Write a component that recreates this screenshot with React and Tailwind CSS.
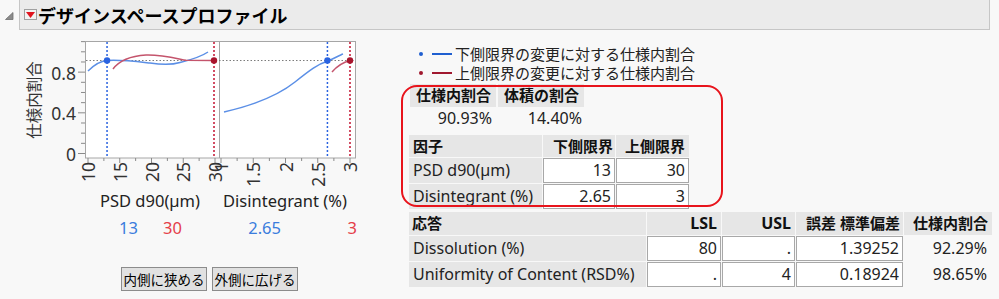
import React from 'react';

const PSDX = (v) => 88 + (v - 10) * 6.35;
const DISX = (v) => 350 - (3 - v) * 64.5;
const Y = (v) => 153 - v * 101.7;
const LIM = Y(0.9093);

function Chart() {
  const yMinor = [0, 0.1, 0.2, 0.3, 0.4, 0.5, 0.6, 0.7, 0.8, 0.9, 1.0, 1.1];
  const psdTicks = [10, 15, 20, 25, 30];
  const psdMinor = [12.5, 17.5, 22.5, 27.5];
  const disTicks = [1, 1.5, 2, 2.5, 3];
  const disMinor = [1.25, 1.75, 2.25, 2.75];
  const tickFont = { fontFamily: '"Noto Sans", sans-serif', fontSize: 17.5, fill: '#333' };
  const labelFont = { fontFamily: '"Noto Sans", sans-serif', fontSize: 16.5, fill: '#222' };

  return (
    <svg width="365" height="188" viewBox="0 30 365 188" className="block">
      {/* y title */}
      <text
        transform="translate(33,100) rotate(-90)"
        textAnchor="middle"
        dominantBaseline="central"
        style={{ fontFamily: '"Noto Sans CJK JP", sans-serif', fontSize: 15.5, fill: '#333' }}
      >
        仕様内割合
      </text>

      {/* y ticks */}
      {yMinor.map((v) => {
        const major = v === 0 || v === 0.4 || v === 0.8;
        return (
          <line key={v} x1={major ? 78 : 81} x2="85" y1={Y(v) + 0.5} y2={Y(v) + 0.5} stroke="#8a8a8a" strokeWidth="1" />
        );
      })}
      {[0, 0.4, 0.8].map((v) => (
        <text key={v} x="76" y={Y(v) + 1} textAnchor="end" dominantBaseline="central" style={tickFont}>
          {v === 0 ? '0' : v.toFixed(1)}
        </text>
      ))}

      {/* panels */}
      <rect x="85.5" y="41.5" width="270" height="116.5" fill="#fff" stroke="#a6a6a6" />
      <line x1="219.5" x2="219.5" y1="41.5" y2="158" stroke="#a6a6a6" />

      {/* x ticks */}
      {psdTicks.map((v) => (
        <line key={v} x1={PSDX(v)} x2={PSDX(v)} y1="158" y2="163" stroke="#8a8a8a" />
      ))}
      {psdMinor.map((v) => (
        <line key={v} x1={PSDX(v)} x2={PSDX(v)} y1="158" y2="161" stroke="#8a8a8a" />
      ))}
      {disTicks.map((v) => (
        <line key={v} x1={DISX(v)} x2={DISX(v)} y1="158" y2="163" stroke="#8a8a8a" />
      ))}
      {disMinor.map((v) => (
        <line key={v} x1={DISX(v)} x2={DISX(v)} y1="158" y2="161" stroke="#8a8a8a" />
      ))}
      {psdTicks.map((v) => (
        <text key={v} transform={`translate(${PSDX(v)},162) rotate(-90)`} textAnchor="end" dominantBaseline="central" style={tickFont}>
          {v}
        </text>
      ))}
      {disTicks.map((v) => (
        <text key={v} transform={`translate(${DISX(v)},162) rotate(-90)`} textAnchor="end" dominantBaseline="central" style={tickFont}>
          {v}
        </text>
      ))}

      {/* limit reference line */}
      <line x1="86" x2="355" y1={LIM} y2={LIM} stroke="#7a7a7a" strokeWidth="1" strokeDasharray="1.5 2" />

      {/* vertical limit lines */}
      <line x1={PSDX(13)} x2={PSDX(13)} y1="42" y2="158" stroke="#2a63e0" strokeWidth="1.5" strokeDasharray="2 2" />
      <line x1={PSDX(30) - 1} x2={PSDX(30) - 1} y1="42" y2="158" stroke="#c41230" strokeWidth="1.5" strokeDasharray="2 2" />
      <line x1={DISX(2.65)} x2={DISX(2.65)} y1="42" y2="158" stroke="#2a63e0" strokeWidth="1.5" strokeDasharray="2 2" />
      <line x1={DISX(3)} x2={DISX(3)} y1="42" y2="158" stroke="#c41230" strokeWidth="1.5" strokeDasharray="2 2" />

      {/* PSD curves */}
      <path d="M88,71 C95,64 100,61 107,60.5 C120,59.5 132,61 150,63 C160,64.5 170,65.5 180,62.5 C190,60 200,57.5 208,52" fill="none" stroke="#5b8fe6" strokeWidth="1.5" />
      <path d="M113,69 C119,61 130,56 146,55 C160,54.5 172,57.5 186,60.3 L214,60.5" fill="none" stroke="#c4546c" strokeWidth="1.5" />
      <circle cx={PSDX(13)} cy={LIM} r="3.2" fill="#2a63e0" />
      <circle cx={PSDX(30) - 1} cy={LIM} r="3.2" fill="#a8142c" />

      {/* Disintegrant curves */}
      <path d="M224,112 C250,106 275,98 295,82 C310,70 318,64 328,61 C335,58 340,55 343,54" fill="none" stroke="#5b8fe6" strokeWidth="1.5" />
      <path d="M332,72 C338,65 344,62 350,60.5" fill="none" stroke="#c4546c" strokeWidth="1.5" />
      <circle cx={DISX(2.65)} cy={LIM} r="3.2" fill="#2a63e0" />
      <circle cx={DISX(3)} cy={LIM} r="3.2" fill="#a8142c" />

      {/* axis labels */}
      <text x="150" y="200" textAnchor="middle" dominantBaseline="central" style={labelFont}>
        PSD d90(µm)
      </text>
      <text x="285" y="200" textAnchor="middle" dominantBaseline="central" style={labelFont}>
        Disintegrant (%)
      </text>
    </svg>
  );
}

function Legend({ color, children }) {
  return (
    <div className="flex h-[19px] items-center">
      <span className="ml-[10px] h-[4px] w-[4px] rounded-full" style={{ background: color }} />
      <span className="ml-[9px] h-[2px] w-[20px]" style={{ background: color }} />
      <span className="ml-[3px] font-['Noto_Sans_CJK_JP',sans-serif] text-[15px] leading-[19px] text-[#222]">{children}</span>
    </div>
  );
}

const hd = "bg-[#e6e6e6] font-['Noto_Sans','Noto_Sans_CJK_JP',sans-serif] font-bold text-[15px] leading-[22px] text-[#111]";
const lbl = "bg-[#e6e6e6] pl-[4px] font-['Noto_Sans',sans-serif] text-[16px] leading-[25px] text-[#222]";
const inp = "border border-[#a8a8a8] bg-white pr-[3px] text-right font-['Noto_Sans',sans-serif] text-[16px] leading-[23px] text-[#222]";
const num = "text-right font-['Noto_Sans',sans-serif] text-[16px] text-[#222]";

export default function App() {
  return (
    <div className="relative h-[299px] w-[999px] overflow-hidden bg-[#f8f8f8] font-['Noto_Sans','Noto_Sans_CJK_JP',sans-serif]">
      {/* outline header */}
      <div className="flex h-[30px] items-center">
        <div className="flex w-[19px] justify-center pt-[1px]">
          <svg width="9" height="8" viewBox="0 0 9 8">
            <polygon points="8,0.5 8,7.5 0.5,7.5" fill="#8c8c8c" stroke="#6f6f6f" strokeWidth="0.8" />
          </svg>
        </div>
        <div className="-mt-px flex h-[31px] w-[971px] items-center border border-[#c6c6c6] bg-[#ebebeb]">
          <div className="ml-[4px] flex h-[11px] w-[13px] items-center justify-center border border-[#a0a0a0] bg-[#f2f2f2]">
            <svg width="9" height="6" viewBox="0 0 9 6">
              <polygon points="0,0 9,0 4.5,6" fill="#e0141e" />
            </svg>
          </div>
          <span className="ml-[1px] font-['Noto_Sans_CJK_JP',sans-serif] text-[18px] font-bold leading-[30px] text-black">
            デザインスペースプロファイル
          </span>
        </div>
      </div>

      <div className="flex">
        {/* left: profiler */}
        <div className="w-[365px]">
          <Chart />
          <div className="flex h-[20px] font-['Noto_Sans',sans-serif] text-[16.5px] leading-[20px]">
            <span className="w-[138px] text-right text-[#3b7ddd]">13</span>
            <span className="w-[44px] text-right text-[#e5404a]">30</span>
            <span className="w-[99px] text-right text-[#3b7ddd]">2.65</span>
            <span className="w-[76px] text-right text-[#e5404a]">3</span>
          </div>
          <div className="mt-[29px] flex gap-[5px] pl-[121px]">
            <button className="h-[24px] w-[86px] border border-[#8c8c8c] bg-[#e1e1e1] p-0 font-['Noto_Sans_CJK_JP',sans-serif] text-[13.5px] leading-[22px] text-black">
              内側に狭める
            </button>
            <button className="h-[24px] w-[86px] border border-[#8c8c8c] bg-[#e1e1e1] p-0 font-['Noto_Sans_CJK_JP',sans-serif] text-[13.5px] leading-[22px] text-black">
              外側に広げる
            </button>
          </div>
        </div>

        {/* right: legend and tables */}
        <div className="ml-[44px] pt-[14px]">
          <Legend color="#1f5fd0">下側限界の変更に対する仕様内割合</Legend>
          <Legend color="#a0182f">上側限界の変更に対する仕様内割合</Legend>

          {/* summary */}
          <div className="mt-[2px] grid w-[174px] grid-cols-[86px_86px] gap-x-[2px] pl-[1px]">
            <div className={`${hd} h-[23px] pl-[6px] leading-[23px]`}>仕様内割合</div>
            <div className={`${hd} h-[23px] pl-[6px] leading-[23px]`}>体積の割合</div>
            <div className={`${num} h-[23px] pr-[4px] leading-[23px]`}>90.93%</div>
            <div className={`${num} h-[23px] pr-[2px] leading-[23px]`}>14.40%</div>
          </div>

          {/* factors */}
          <div className="mt-[5px] grid grid-cols-[133px_72px_73px] gap-x-[1px] gap-y-[1px]">
            <div className={`${hd} h-[22px] pl-[4px]`}>因子</div>
            <div className={`${hd} h-[22px] pr-[2px] text-right`}>下側限界</div>
            <div className={`${hd} h-[22px] pr-[4px] text-right`}>上側限界</div>
            <div className={`${lbl} h-[25px]`}>PSD d90(µm)</div>
            <div className={`${inp} h-[25px]`}>13</div>
            <div className={`${inp} h-[25px]`}>30</div>
            <div className={`${lbl} h-[25px]`}>Disintegrant (%)</div>
            <div className={`${inp} h-[25px]`}>2.65</div>
            <div className={`${inp} h-[25px]`}>3</div>
          </div>

          {/* responses */}
          <div className="mt-[3px] grid grid-cols-[237px_74px_73px_107px_88px] gap-x-[1px] gap-y-[1px]">
            <div className={`${hd} h-[23px] pl-[3px]`}>応答</div>
            <div className={`${hd} h-[23px] pr-[4px] text-right text-[16px]`}>LSL</div>
            <div className={`${hd} h-[23px] pr-[4px] text-right text-[16px]`}>USL</div>
            <div className={`${hd} h-[23px] pr-[3px] text-right`}>誤差 標準偏差</div>
            <div className={`${hd} h-[23px] pr-[4px] text-right`}>仕様内割合</div>

            <div className={`${lbl} h-[25px]`}>Dissolution (%)</div>
            <div className={`${inp} h-[25px]`}>80</div>
            <div className={`${inp} h-[25px]`}>.</div>
            <div className={`${inp} h-[25px]`}>1.39252</div>
            <div className={`${num} h-[25px] pr-[5px] leading-[25px]`}>92.29%</div>

            <div className={`${lbl} h-[25px]`}>Uniformity of Content (RSD%)</div>
            <div className={`${inp} h-[25px]`}>.</div>
            <div className={`${inp} h-[25px]`}>4</div>
            <div className={`${inp} h-[25px]`}>0.18924</div>
            <div className={`${num} h-[25px] pr-[5px] leading-[25px]`}>98.65%</div>
          </div>
        </div>
      </div>

      {/* red annotation around the limit tables */}
      <div className="pointer-events-none absolute left-[401px] top-[85px] h-[122px] w-[322px] rounded-[16px] border-2 border-[#e8141c]" />
    </div>
  );
}
